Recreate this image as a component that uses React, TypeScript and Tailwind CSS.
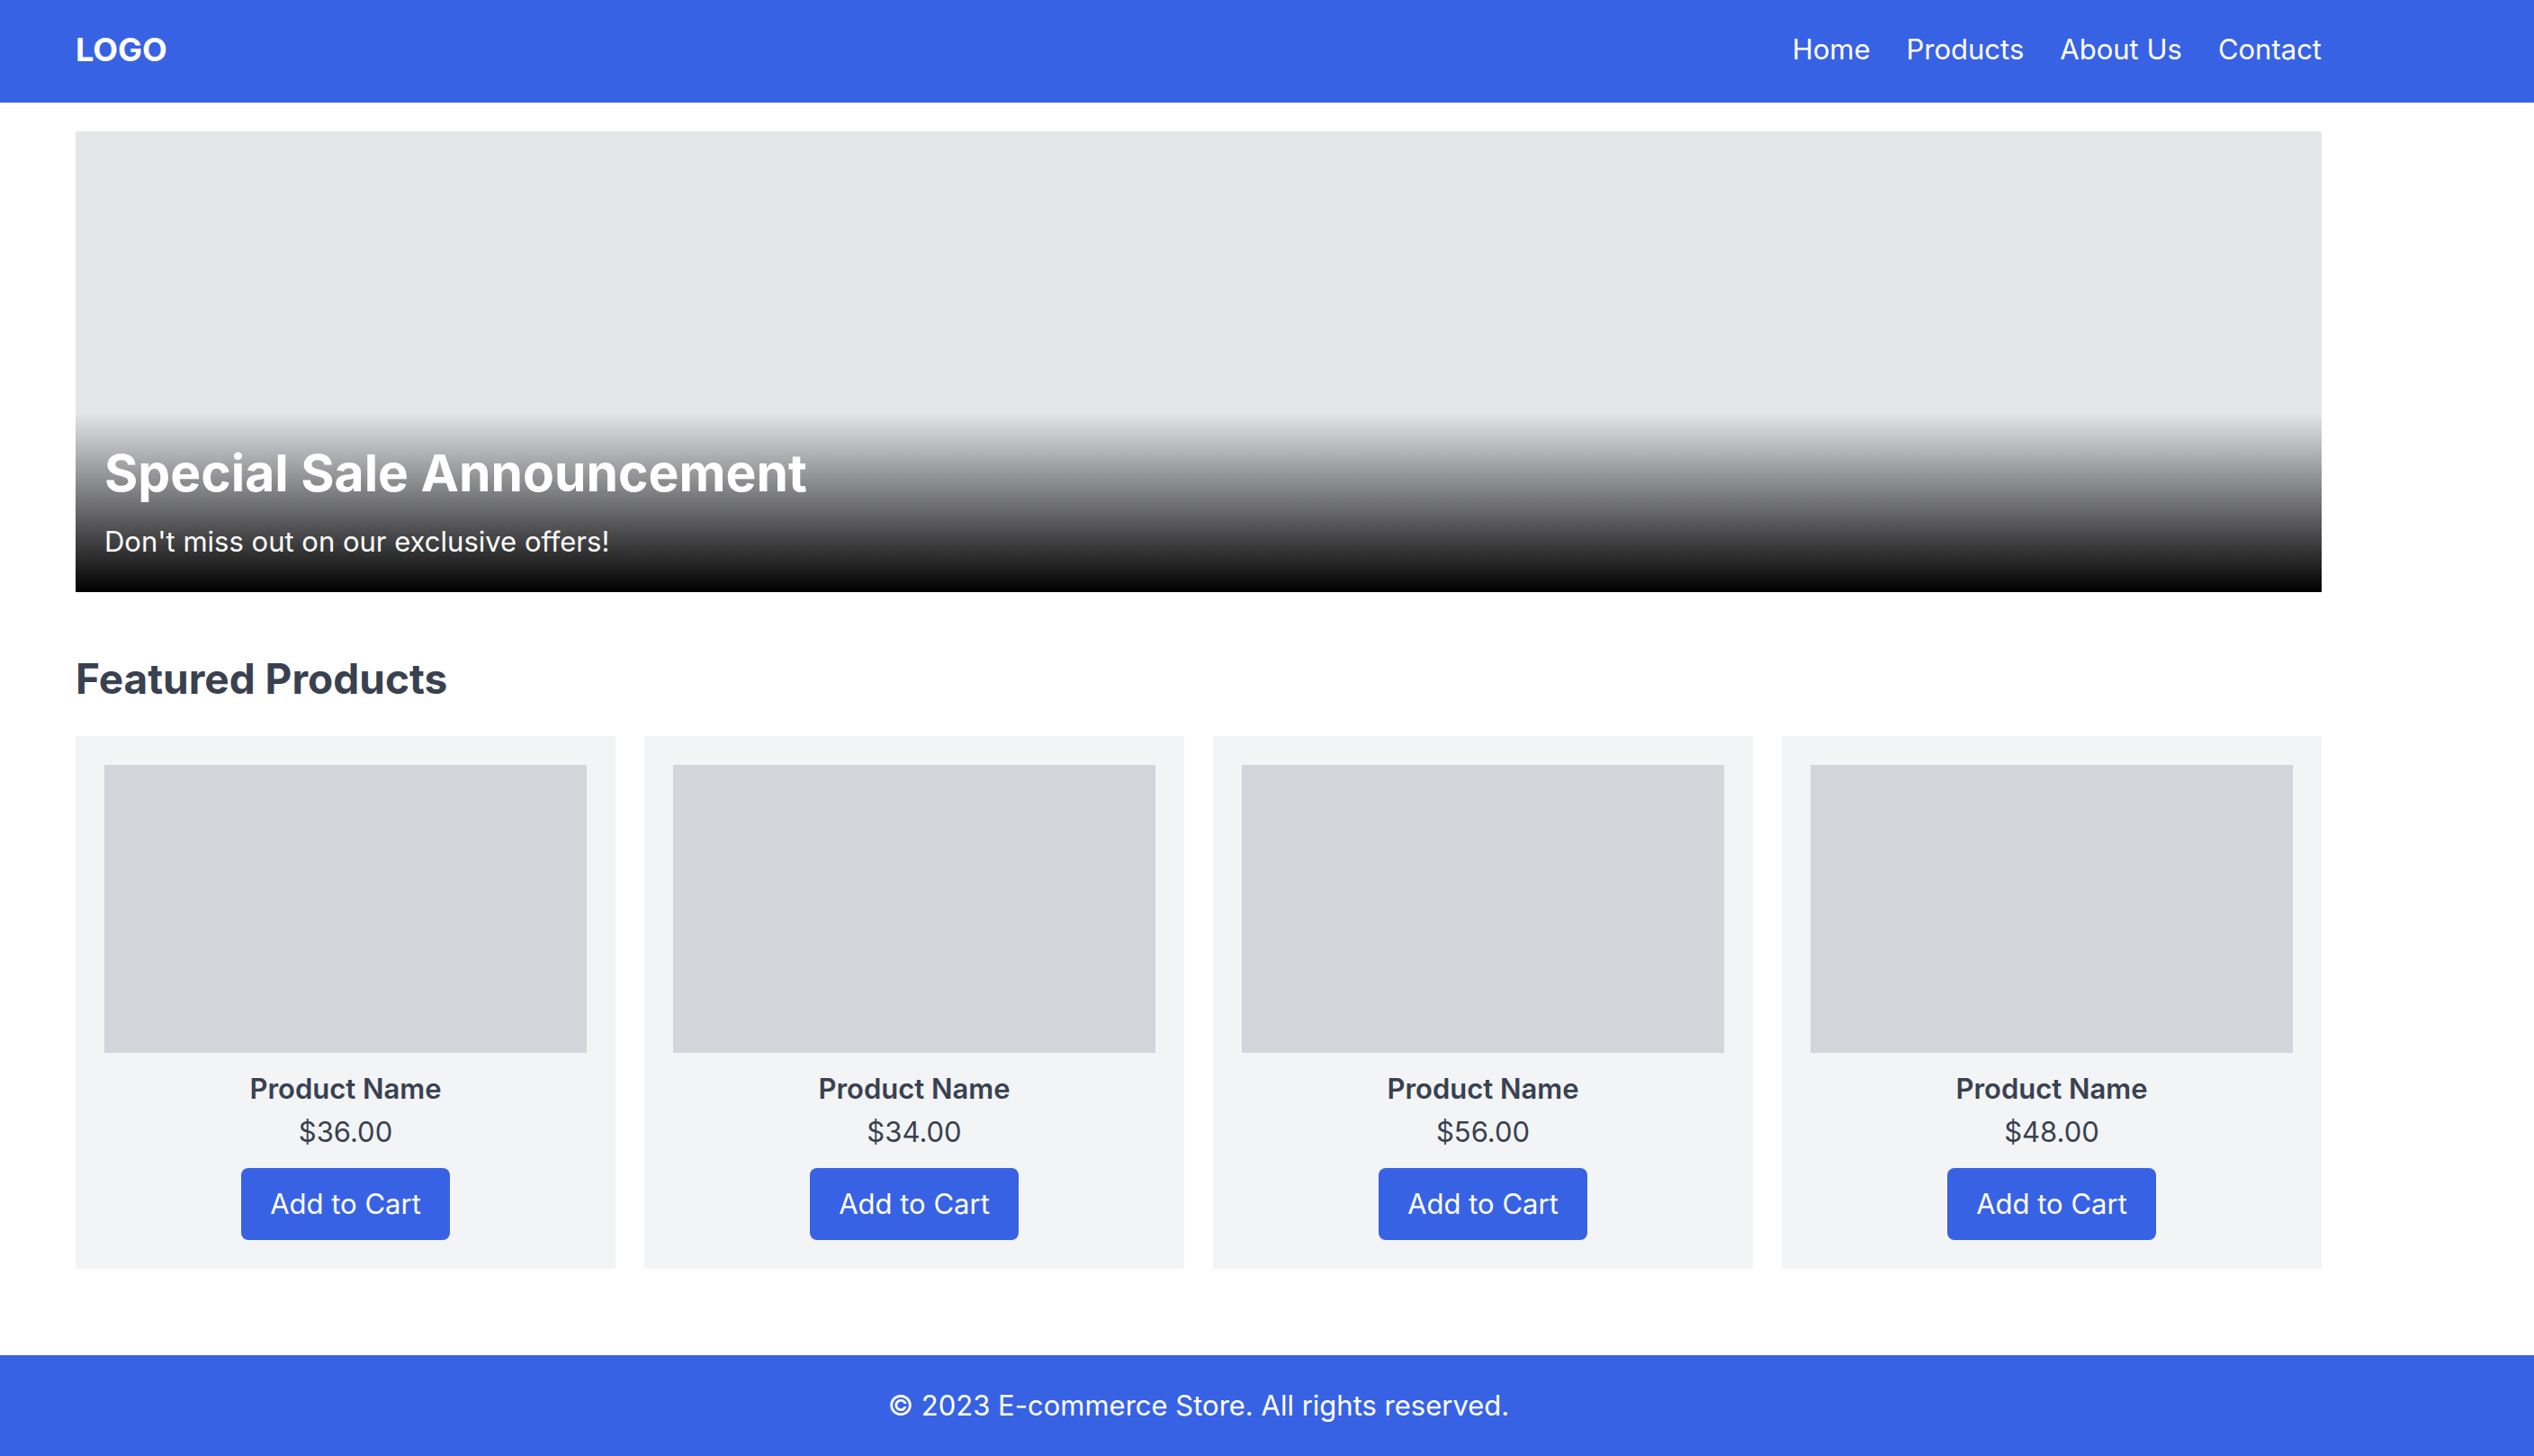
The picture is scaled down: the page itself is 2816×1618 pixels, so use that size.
const links = ["Home", "Products", "About Us", "Contact"];

const products = [
  { id: 1, name: "Product Name", price: "$36.00" },
  { id: 2, name: "Product Name", price: "$34.00" },
  { id: 3, name: "Product Name", price: "$56.00" },
  { id: 4, name: "Product Name", price: "$48.00" },
];

function Header() {
  return (
    <header className="bg-[#3862e4] pt-[27px] pr-[236px] pb-[31px] pl-[84px] text-white">
      <div className="flex items-center justify-between">
        <div className="text-[36px] leading-[56px] font-bold">LOGO</div>
        <nav className="flex gap-10">
          {links.map((label) => (
            <a key={label} href="#">
              {label}
            </a>
          ))}
        </nav>
      </div>
    </header>
  );
}

function Hero() {
  return (
    <section className="mb-16 flex h-[512px] flex-col justify-end bg-[#e5e6ea]">
      <div className="bg-linear-to-t/srgb from-black to-transparent p-8 text-white">
        <h1 className="mb-4 text-[57px] leading-[72px] font-bold">Special Sale Announcement</h1>
        <p>Don't miss out on our exclusive offers!</p>
      </div>
    </section>
  );
}

function ProductCard({ name, price }: { name: string; price: string }) {
  return (
    <article className="flex flex-col items-center bg-[#f2f4f6] p-8">
      <div className="mb-4 h-80 w-full bg-[#d2d5da]" />
      <h3 className="font-semibold">{name}</h3>
      <p>{price}</p>
      <button type="button" className="mt-4 rounded-lg bg-[#3862e4] px-8 py-4 text-white">
        Add to Cart
      </button>
    </article>
  );
}

export default function App() {
  return (
    <div className="min-h-screen bg-white font-['Inter',sans-serif] text-[31px] leading-[48px] text-[#394150]">
      <Header />
      <main className="pt-8 pr-[236px] pb-24 pl-[84px]">
        <Hero />
        <section>
          <h2 className="mb-8 text-[46px] leading-[64px] font-bold">Featured Products</h2>
          <div className="grid grid-cols-4 gap-8">
            {products.map((product) => (
              <ProductCard key={product.id} name={product.name} price={product.price} />
            ))}
          </div>
        </section>
      </main>
      <footer className="bg-[#3862e4] py-8 pr-[236px] pl-[84px] text-center text-white">
        <p>© 2023 E-commerce Store. All rights reserved.</p>
      </footer>
    </div>
  );
}
